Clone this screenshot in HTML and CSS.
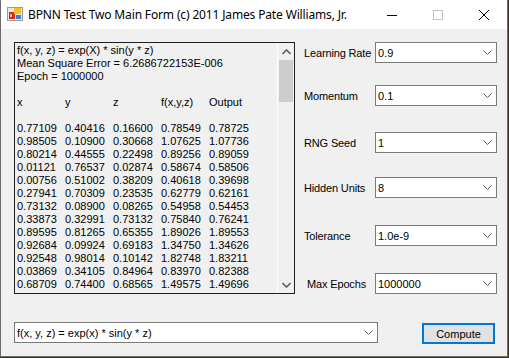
FILE: index.html
```html
<!DOCTYPE html>
<html lang="en">
<head>
  <meta charset="UTF-8" />
  <title>BPNN Test Two Main Form</title>
  <link rel="stylesheet" href="styles.css">
</head>
<body>

  <div class="window">
    <div class="titlebar">
      <svg class="appicon" width="16" height="16" viewBox="0 0 16 16">
        <rect x="0.5" y="1.5" width="15" height="13" fill="#e8e8e8" stroke="#9a9a9a"/>
        <rect x="2" y="6" width="6" height="7" fill="#d42a1c"/>
        <rect x="3" y="8" width="2" height="3" fill="#f7b0a8"/>
        <rect x="7" y="2" width="7" height="6" fill="#f5c21b"/>
        <rect x="9" y="9" width="5" height="4" fill="#3b7fd9"/>
      </svg>
      <div class="title">BPNN Test Two Main Form (c) 2011 James Pate Williams, Jr.</div>
      <div class="winbtn">
        <svg width="10" height="10" viewBox="0 0 10 10"><path d="M0 5.5H10" stroke="#000" stroke-width="1"/></svg>
      </div>
      <div class="winbtn">
        <svg width="10" height="10" viewBox="0 0 10 10"><rect x="0.5" y="0.5" width="9" height="9" fill="none" stroke="#c4c4c4"/></svg>
      </div>
      <div class="winbtn">
        <svg width="10" height="10" viewBox="0 0 10 10"><path d="M0 0L10 10M10 0L0 10" stroke="#000" stroke-width="1"/></svg>
      </div>
    </div>

    <div class="client">
      <div class="main">
        <div class="output">
          <div class="lines">
            <div>f(x, y, z) = exp(X) * sin(y * z)</div>
            <div>Mean Square Error = 6.2686722153E-006</div>
            <div>Epoch = 1000000</div>
            <div>&nbsp;</div>
            <div class="row"><span>x</span><span>y</span><span>z</span><span>f(x,y,z)</span><span>Output</span></div>
            <div>&nbsp;</div>
            <div class="row"><span>0.77109</span><span>0.40416</span><span>0.16600</span><span>0.78549</span><span>0.78725</span></div>
            <div class="row"><span>0.98505</span><span>0.10900</span><span>0.30668</span><span>1.07625</span><span>1.07736</span></div>
            <div class="row"><span>0.80214</span><span>0.44555</span><span>0.22498</span><span>0.89256</span><span>0.89059</span></div>
            <div class="row"><span>0.01121</span><span>0.76537</span><span>0.02874</span><span>0.58674</span><span>0.58506</span></div>
            <div class="row"><span>0.00756</span><span>0.51002</span><span>0.38209</span><span>0.40618</span><span>0.39698</span></div>
            <div class="row"><span>0.27941</span><span>0.70309</span><span>0.23535</span><span>0.62779</span><span>0.62161</span></div>
            <div class="row"><span>0.73132</span><span>0.08900</span><span>0.08265</span><span>0.54958</span><span>0.54453</span></div>
            <div class="row"><span>0.33873</span><span>0.32991</span><span>0.73132</span><span>0.75840</span><span>0.76241</span></div>
            <div class="row"><span>0.89595</span><span>0.81265</span><span>0.65355</span><span>1.89026</span><span>1.89553</span></div>
            <div class="row"><span>0.92684</span><span>0.09924</span><span>0.69183</span><span>1.34750</span><span>1.34626</span></div>
            <div class="row"><span>0.92548</span><span>0.98014</span><span>0.10142</span><span>1.82748</span><span>1.83211</span></div>
            <div class="row"><span>0.03869</span><span>0.34105</span><span>0.84964</span><span>0.83970</span><span>0.82388</span></div>
            <div class="row"><span>0.68709</span><span>0.74400</span><span>0.68565</span><span>1.49575</span><span>1.49696</span></div>
          </div>
          <div class="scrollbar">
            <div class="sb-btn">
              <svg width="9" height="6" viewBox="0 0 9 6"><path d="M0.5 5L4.5 1L8.5 5" fill="none" stroke="#606060" stroke-width="1.6"/></svg>
            </div>
            <div class="sb-thumb"></div>
            <div class="sb-track"></div>
            <div class="sb-btn">
              <svg width="9" height="6" viewBox="0 0 9 6"><path d="M0.5 1L4.5 5L8.5 1" fill="none" stroke="#606060" stroke-width="1.6"/></svg>
            </div>
          </div>
        </div>

        <div class="settings">
          <div class="field">
            <label>Learning Rate</label>
            <div class="combo"><span>0.9</span><svg width="9" height="5" viewBox="0 0 9 5"><path d="M0.5 0.5L4.5 4.5L8.5 0.5" fill="none" stroke="#5a5a5a"/></svg></div>
          </div>
          <div class="field">
            <label>Momentum</label>
            <div class="combo"><span>0.1</span><svg width="9" height="5" viewBox="0 0 9 5"><path d="M0.5 0.5L4.5 4.5L8.5 0.5" fill="none" stroke="#5a5a5a"/></svg></div>
          </div>
          <div class="field">
            <label>RNG Seed</label>
            <div class="combo"><span>1</span><svg width="9" height="5" viewBox="0 0 9 5"><path d="M0.5 0.5L4.5 4.5L8.5 0.5" fill="none" stroke="#5a5a5a"/></svg></div>
          </div>
          <div class="field">
            <label>Hidden Units</label>
            <div class="combo"><span>8</span><svg width="9" height="5" viewBox="0 0 9 5"><path d="M0.5 0.5L4.5 4.5L8.5 0.5" fill="none" stroke="#5a5a5a"/></svg></div>
          </div>
          <div class="field">
            <label>Tolerance</label>
            <div class="combo"><span>1.0e-9</span><svg width="9" height="5" viewBox="0 0 9 5"><path d="M0.5 0.5L4.5 4.5L8.5 0.5" fill="none" stroke="#5a5a5a"/></svg></div>
          </div>
          <div class="field">
            <label class="indent">Max Epochs</label>
            <div class="combo"><span>1000000</span><svg width="9" height="5" viewBox="0 0 9 5"><path d="M0.5 0.5L4.5 4.5L8.5 0.5" fill="none" stroke="#5a5a5a"/></svg></div>
          </div>
        </div>
      </div>

      <div class="bottom">
        <div class="combo wide"><span>f(x, y, z) = exp(x) * sin(y * z)</span><svg width="9" height="5" viewBox="0 0 9 5"><path d="M0.5 0.5L4.5 4.5L8.5 0.5" fill="none" stroke="#5a5a5a"/></svg></div>
        <button class="compute">Compute</button>
      </div>
    </div>
  </div>

</body>
</html>
```

FILE: styles.css
```css
body {
  margin: 0;
  background-color: #3b3528;
  font-family: "Liberation Sans", Arial, sans-serif;
  font-size: 11px;
  color: #000;
}

.window {
  width: 506px;
  height: 356px;
  border: 1px solid #6b6b6b;
  border-top: none;
  background-color: #f0f0f0;
  display: flex;
  flex-direction: column;
}

.titlebar {
  height: 29px;
  background-color: #fff;
  display: flex;
  align-items: center;
}

.appicon {
  margin-left: 6px;
  margin-bottom: 1px;
}

.title {
  flex: 1;
  margin-left: 5px;
  font-size: 12px;
  font-family: "Noto Sans", sans-serif;
  letter-spacing: -0.15px;
  padding-bottom: 1px;
}

.winbtn {
  width: 46px;
  height: 29px;
  display: flex;
  align-items: center;
  justify-content: center;
}

.client {
  padding: 13px 0 0 13px;
}

.main {
  display: flex;
}

.output {
  width: 279px;
  height: 250px;
  border: 1px solid #1e1e1e;
  background-color: #f0f0f0;
  display: flex;
}

.lines {
  flex: 1;
  padding: 1px 0 0 2px;
  line-height: 13px;
  white-space: nowrap;
  overflow: hidden;
}

.row span {
  display: inline-block;
  width: 48px;
}

.scrollbar {
  width: 16px;
  border-left: 1px solid #fff;
  display: flex;
  flex-direction: column;
}

.sb-btn {
  height: 17px;
  display: flex;
  align-items: center;
  justify-content: center;
}

.sb-thumb {
  height: 42px;
  margin: 0 1px;
  background-color: #cdcdcd;
}

.sb-track {
  flex: 1;
}

.settings {
  margin-left: 9px;
  display: flex;
  flex-direction: column;
}

.field {
  display: flex;
  align-items: center;
}

.field:nth-child(2) { margin-top: 22px; }
.field:nth-child(3) { margin-top: 26px; }
.field:nth-child(4) { margin-top: 24px; }
.field:nth-child(5) { margin-top: 27px; }
.field:nth-child(6) { margin-top: 27px; }

.field label {
  width: 71px;
  letter-spacing: -0.15px;
}

.field label.indent {
  width: 68px;
  padding-left: 3px;
}

.combo {
  width: 118px;
  height: 19px;
  border: 1px solid #7a7a7a;
  background-color: #fff;
  display: flex;
  align-items: center;
  padding-left: 2px;
  box-sizing: content-box;
}

.combo span {
  flex: 1;
}

.combo svg {
  margin-right: 4px;
}

.combo.wide {
  width: 360px;
}

.bottom {
  display: flex;
  align-items: flex-start;
  margin-top: 28px;
}

.compute {
  margin-left: 44px;
  margin-top: 1px;
  width: 73px;
  height: 21px;
  border: 2px solid #0078d7;
  background-color: #e1e1e1;
  font-family: "Liberation Sans", Arial, sans-serif;
  font-size: 11px;
  color: #000;
  padding: 0;
}
```
